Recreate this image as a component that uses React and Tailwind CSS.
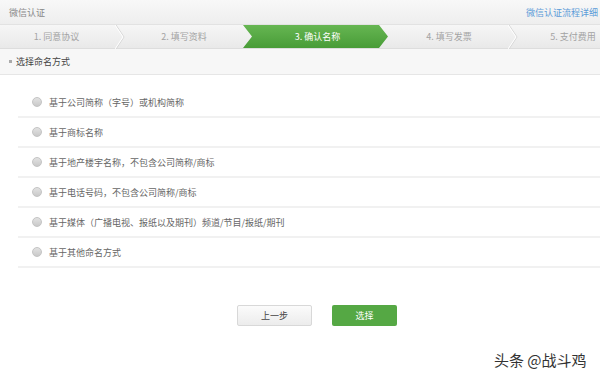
import React from 'react'

const steps = [
  { label: '1. 同意协议', w: 'w-[125px] pr-[12px]', chevron: true },
  { label: '2. 填写资料', w: 'w-[118px]', chevron: false },
  { label: '3. 确认名称', w: 'w-[145px]', active: true },
  { label: '4. 填写发票', w: 'w-[130px] pr-[8px]', chevron: true },
  { label: '5. 支付费用', w: 'flex-1 pl-[28px]', chevron: false },
]

const options = [
  '基于公司简称（字号）或机构简称',
  '基于商标名称',
  '基于地产楼宇名称，不包含公司简称/商标',
  '基于电话号码，不包含公司简称/商标',
  '基于媒体（广播电视、报纸以及期刊）频道/节目/报纸/期刊',
  '基于其他命名方式',
]

function Chevron() {
  return (
    <svg className="absolute right-0 top-0" width="10" height="24" viewBox="0 0 10 24">
      <polyline points="1,0 9,12 1,24" fill="none" stroke="#d6d6d6" strokeWidth="1" />
      <polyline points="0,0 8,12 0,24" fill="none" stroke="#ffffff" strokeWidth="1" />
    </svg>
  )
}

export default function App() {
  return (
    <div className="relative w-[600px] h-[380px] overflow-hidden bg-white font-['Noto_Sans_CJK_SC','Noto_Sans',sans-serif]">
      {/* header */}
      <div className="h-[25px] flex items-center justify-between px-[9px] bg-gradient-to-b from-[#f8f8f8] to-[#eeeeee] border-b border-[#e2e2e2]">
        <span className="text-[9px] leading-none text-[#888]">微信认证</span>
        <span className="text-[9px] leading-none text-[#5b9bd8] whitespace-nowrap -mr-[7px]">微信认证流程详细</span>
      </div>

      {/* steps */}
      <div className="h-[24px] flex bg-gradient-to-b from-[#f6f6f6] to-[#e9e9e9] border-b border-[#dddddd]">
        {steps.map((s) =>
          s.active ? (
            <div
              key={s.label}
              className={`${s.w} shrink-0 flex items-center justify-center pl-[4px] bg-gradient-to-b from-[#66b652] to-[#489c37] text-white text-[9px] leading-none [clip-path:polygon(0_0,136px_0,145px_50%,136px_100%,0_100%,9px_50%)]`}
            >
              {s.label}
            </div>
          ) : (
            <div
              key={s.label}
              className={`${s.w} relative shrink-0 flex items-center justify-center text-[9px] leading-none text-[#a3a3a3] whitespace-nowrap`}
            >
              {s.label}
              {s.chevron && <Chevron />}
            </div>
          )
        )}
      </div>

      {/* section title */}
      <div className="h-[26px] flex items-center pl-[9px] gap-[4px] bg-[#f7f7f7] border-b border-[#e6e6e6]">
        <span className="w-[3px] h-[3px] bg-[#aaaaaa]" />
        <span className="text-[9px] leading-none text-[#444]">选择命名方式</span>
      </div>

      {/* options */}
      <div className="pt-[13px] pl-[18px]">
        {options.map((o) => (
          <div key={o} className="h-[30px] flex items-center gap-[7px] pl-[14px] border-b-2 border-[#f1f1f1]">
            <span className="w-[10px] h-[10px] rounded-full bg-gradient-to-b from-[#e2e2e2] to-[#c9c9c9] border border-[#c4c4c4]" />
            <span className="text-[9px] leading-none text-[#666]">{o}</span>
          </div>
        ))}
      </div>

      {/* buttons */}
      <div className="mt-[37px] flex pl-[237px] gap-[20px]">
        <button className="w-[75px] h-[21px] rounded-[2px] border border-[#d8d8d8] bg-gradient-to-b from-[#fbfbfb] to-[#ececec] text-[9px] leading-none text-[#444]">
          上一步
        </button>
        <button className="w-[65px] h-[21px] rounded-[2px] bg-[#55a844] text-[9px] leading-none text-white">
          选择
        </button>
      </div>

      {/* watermark */}
      <div className="absolute left-[494px] top-[352px] text-[15px] leading-none text-[#333] whitespace-nowrap [text-shadow:0_0_3px_#fff]">
        头条 @战斗鸡
      </div>
    </div>
  )
}
